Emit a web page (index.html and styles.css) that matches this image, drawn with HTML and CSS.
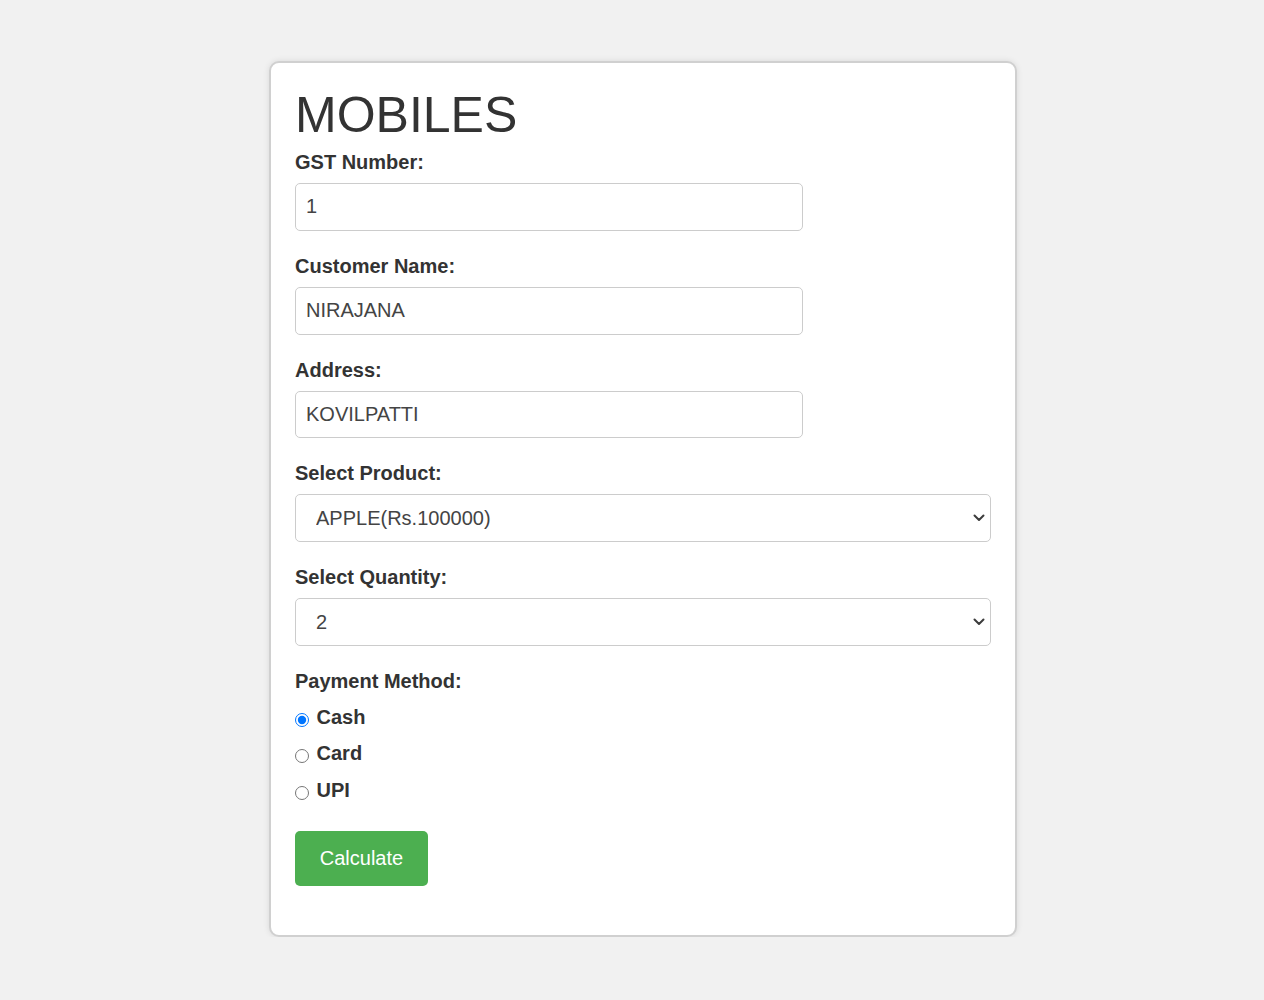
FILE: index.html
```html
<!DOCTYPE html>
<html>
<head>
<meta charset="utf-8">
<link rel="stylesheet" href="styles.css">
</head>
<body>
<div class="card">
  <h1 class="title">MOBILES</h1>
  <form class="form">
    <label class="label" for="gst">GST Number:</label>
    <input class="input" id="gst" type="text" value="1">

    <label class="label" for="name">Customer Name:</label>
    <input class="input" id="name" type="text" value="NIRAJANA">

    <label class="label" for="addr">Address:</label>
    <input class="input" id="addr" type="text" value="KOVILPATTI">

    <label class="label" for="prod">Select Product:</label>
    <div class="select-wrap">
      <select class="select" id="prod">
        <option>APPLE(Rs.100000)</option>
      </select>
      <svg class="chevron" width="12" height="8" viewBox="0 0 12 8"><path d="M1.5 1.5 L6 6 L10.5 1.5" fill="none" stroke="#3c3c3c" stroke-width="2" stroke-linecap="round" stroke-linejoin="round"/></svg>
    </div>

    <label class="label" for="qty">Select Quantity:</label>
    <div class="select-wrap">
      <select class="select" id="qty">
        <option>2</option>
      </select>
      <svg class="chevron" width="12" height="8" viewBox="0 0 12 8"><path d="M1.5 1.5 L6 6 L10.5 1.5" fill="none" stroke="#3c3c3c" stroke-width="2" stroke-linecap="round" stroke-linejoin="round"/></svg>
    </div>

    <div class="label">Payment Method:</div>
    <div class="radios">
      <label class="radio"><input type="radio" name="pay" checked> Cash</label>
      <label class="radio"><input type="radio" name="pay"> Card</label>
      <label class="radio"><input type="radio" name="pay"> UPI</label>
    </div>

    <button type="button" class="btn">Calculate</button>
  </form>
</div>
</body>
</html>
```

FILE: styles.css
```css
html, body {
  margin: 0;
  padding: 0;
}
body {
  background: #f1f1f1;
  font-family: "Liberation Sans", Arial, sans-serif;
  color: #333;
}
.card {
  box-sizing: border-box;
  width: 748px;
  height: 876px;
  margin: 61px 0 0 269px;
  background: #fff;
  border: 2px solid #d0d0d0;
  border-radius: 10px;
  box-shadow: 0 0 6px rgba(0, 0, 0, 0.1);
  padding: 24px;
}
.title {
  font-size: 50px;
  font-weight: normal;
  margin: 0 0 8px 0;
  color: #333;
  line-height: 56px;
}
.form {
  display: flex;
  flex-direction: column;
  align-items: flex-start;
}
.label {
  display: block;
  font-size: 20px;
  font-weight: bold;
  line-height: 23px;
  margin-bottom: 9px;
  color: #333;
}
.input {
  box-sizing: border-box;
  width: 508px;
  height: 47.75px;
  padding: 0 10px;
  border: 1px solid #ccc;
  border-radius: 5px;
  font-family: "Liberation Sans", Arial, sans-serif;
  font-size: 20px;
  color: #444;
  margin: 0 0 24px 0;
  outline: none;
}
.select-wrap {
  position: relative;
  width: 696px;
  margin-bottom: 24px;
}
.select {
  box-sizing: border-box;
  width: 100%;
  height: 47.75px;
  -webkit-appearance: none;
  appearance: none;
  background: #fff;
  border: 1px solid #ccc;
  border-radius: 5px;
  padding: 0 30px 0 20px;
  font-family: "Liberation Sans", Arial, sans-serif;
  font-size: 20px;
  color: #444;
  display: block;
  outline: none;
}
.chevron {
  position: absolute;
  right: 6px;
  top: 20px;
  pointer-events: none;
}
.radios {
  display: flex;
  flex-direction: column;
  gap: 13.5px;
  margin-top: 4px;
}
.radio {
  font-size: 20px;
  font-weight: bold;
  line-height: 23px;
  color: #333;
}
.radio input {
  margin: 0 2px 0 0;
  width: 14px;
  height: 14px;
  vertical-align: -3px;
}
.btn {
  margin-top: 29px;
  width: 133px;
  height: 55px;
  background: #4caf50;
  color: #fff;
  border: none;
  border-radius: 5px;
  font-family: "Liberation Sans", Arial, sans-serif;
  font-size: 20px;
  padding: 0;
  cursor: pointer;
}
```
